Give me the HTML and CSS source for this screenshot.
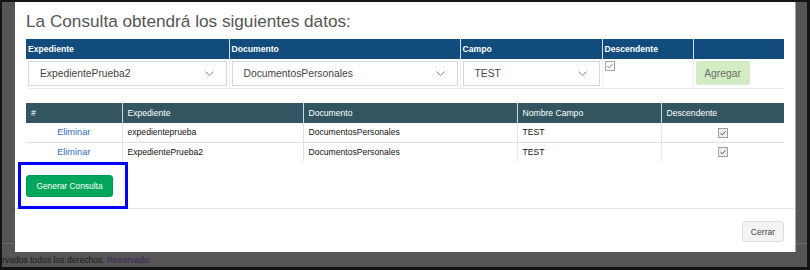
FILE: index.html
```html
<!DOCTYPE html>
<html lang="es">

<head>
    <meta charset="UTF-8">
    <meta name="viewport" content="width=device-width, initial-scale=1.0">
    <title>Consulta</title>
    <link rel="stylesheet" href="styles.css">
</head>

<body>

    <div class="screen">
        <div class="page">
            <footer class="page-footer">rvados todos los derechos. <a class="visited">Reservado</a></footer>
        </div>

        <!-- Modal de consulta -->
        <div class="modal">
            <div class="modal-body">
                <h3 class="modal-title">La Consulta obtendrá los siguientes datos:</h3>

                <table class="picker">
                    <colgroup>
                        <col style="width: 203px">
                        <col style="width: 231px">
                        <col style="width: 142px">
                        <col style="width: 91px">
                        <col style="width: 91px">
                    </colgroup>
                    <tr>
                        <th>Expediente</th>
                        <th>Documento</th>
                        <th>Campo</th>
                        <th>Descendente</th>
                        <th></th>
                    </tr>
                    <tr>
                        <td>
                            <div class="select">
                                <span>ExpedientePrueba2</span>
                                <svg viewBox="0 0 9 5"><path d="M0.5 0.5 L4.5 4.5 L8.5 0.5" fill="none" stroke="#8c8c8c" /></svg>
                            </div>
                        </td>
                        <td>
                            <div class="select">
                                <span>DocumentosPersonales</span>
                                <svg viewBox="0 0 9 5"><path d="M0.5 0.5 L4.5 4.5 L8.5 0.5" fill="none" stroke="#8c8c8c" /></svg>
                            </div>
                        </td>
                        <td>
                            <div class="select">
                                <span>TEST</span>
                                <svg viewBox="0 0 9 5"><path d="M0.5 0.5 L4.5 4.5 L8.5 0.5" fill="none" stroke="#8c8c8c" /></svg>
                            </div>
                        </td>
                        <td>
                            <svg class="check light" viewBox="0 0 10 10"><rect x="0.5" y="0.5" width="9" height="9" fill="#fafafa" stroke="#a8a8a8" /><path d="M2.3 5 L4.1 6.8 L7.6 3" fill="none" stroke="#8a8a8a" /></svg>
                        </td>
                        <td><button class="btn btn-add">Agregar</button></td>
                    </tr>
                </table>

                <table class="results">
                    <colgroup>
                        <col style="width: 96px">
                        <col style="width: 181px">
                        <col style="width: 214px">
                        <col style="width: 144px">
                        <col style="width: 123px">
                    </colgroup>
                    <tr>
                        <th>#</th>
                        <th>Expediente</th>
                        <th>Documento</th>
                        <th>Nombre Campo</th>
                        <th>Descendente</th>
                    </tr>
                    <tr>
                        <td class="center"><a class="link" href="#">Eliminar</a></td>
                        <td>expedienteprueba</td>
                        <td>DocumentosPersonales</td>
                        <td>TEST</td>
                        <td class="center">
                            <svg class="check" viewBox="0 0 10 10"><rect x="0.5" y="0.5" width="9" height="9" fill="#eeeeee" stroke="#a0a0a0" /><path d="M2.5 5.2 L4.2 6.8 L7.5 3.4" fill="none" stroke="#555" /></svg>
                        </td>
                    </tr>
                    <tr>
                        <td class="center"><a class="link" href="#">Eliminar</a></td>
                        <td>ExpedientePrueba2</td>
                        <td>DocumentosPersonales</td>
                        <td>TEST</td>
                        <td class="center">
                            <svg class="check" viewBox="0 0 10 10"><rect x="0.5" y="0.5" width="9" height="9" fill="#eeeeee" stroke="#a0a0a0" /><path d="M2.5 5.2 L4.2 6.8 L7.5 3.4" fill="none" stroke="#555" /></svg>
                        </td>
                    </tr>
                </table>

                <div class="actions">
                    <button class="btn btn-generate">Generar Consulta</button>
                </div>

                <!-- Marca azul sobre el botón -->
                <div class="highlight"></div>
            </div>

            <div class="modal-footer">
                <button class="btn btn-close">Cerrar</button>
            </div>
        </div>
    </div>

</body>

</html>
```

FILE: styles.css
```css
* {
    box-sizing: border-box;
}

body {
    margin: 0;
    font-family: "Liberation Sans", Arial, sans-serif;
}

.screen {
    position: relative;
    width: 810px;
    height: 270px;
    border-style: solid;
    border-color: #141414;
    border-width: 2px 3px 3px 2px;
    background-color: #555;
    overflow: hidden;
}

/* Page behind the overlay */
.page {
    height: 100%;
    display: flex;
    flex-direction: column;
    justify-content: flex-end;
}

.page-footer {
    height: 24px;
    padding-top: 10px;
    border-top: 1px solid #6b6b6b;
    font-size: 8.6px;
    line-height: 12px;
    color: #1c1c1c;
    white-space: nowrap;
}

.visited {
    color: #42205a;
}

/* Modal */
.modal {
    position: absolute;
    left: 13px;
    top: 0;
    width: 781px;
    background-color: #fff;
    border-right: 1px solid #a3a3a3;
}

.modal-body {
    position: relative;
    padding: 9px 11px 11px;
}

.modal-title {
    margin: 0 0 8px;
    font-size: 17.2px;
    line-height: 20px;
    font-weight: normal;
    color: #555;
}

table {
    width: 100%;
    border-collapse: collapse;
    table-layout: fixed;
}

.picker th {
    height: 20px;
    padding: 0 2px;
    background-color: #114c7d;
    color: #fff;
    font-size: 8.6px;
    font-weight: bold;
    text-align: left;
    border-left: 1px solid #d5dfea;
}

.picker td {
    padding: 2px;
    vertical-align: top;
    border-left: 1px solid #f0f0f0;
    border-bottom: 1px solid #ececec;
}

.picker th:first-child,
.picker td:first-child,
.results th:first-child,
.results td:first-child {
    border-left: none;
}

.select {
    display: flex;
    align-items: center;
    justify-content: space-between;
    height: 25px;
    padding: 0 12px 0 11px;
    border: 1px solid #d2d8df;
    font-size: 10.3px;
    color: #444;
}

.select svg {
    width: 9px;
    height: 5px;
}

.check {
    display: inline-block;
    width: 10px;
    height: 10px;
    vertical-align: middle;
}

.check.light {
    vertical-align: top;
}

.btn {
    font-family: inherit;
    border: 1px solid transparent;
    border-radius: 3px;
    padding: 0;
    cursor: pointer;
}

.btn-add {
    width: 54px;
    height: 24px;
    background-color: #d4ecc3;
    color: #6e6e6e;
    font-size: 10.3px;
}

.results {
    margin-top: 14px;
}

.results th {
    height: 20px;
    padding: 0 5px;
    background-color: #335562;
    color: #fff;
    font-size: 8.6px;
    font-weight: normal;
    text-align: left;
    border-left: 1px solid #d0d8db;
}

.results td {
    height: 19px;
    padding: 0 5px;
    font-size: 8.6px;
    color: #111;
    border-left: 1px solid #e2e2e2;
    border-bottom: 1px solid #e0e0e0;
}

.results tr:last-child td {
    border-bottom: none;
}

.results .center {
    text-align: center;
}

.link {
    color: #2f6cbf;
    font-size: 9.2px;
    text-decoration: none;
}

.actions {
    padding-top: 14px;
}

.btn-generate {
    width: 87px;
    height: 22px;
    background-color: #00a65a;
    border-color: #009551;
    color: #fff;
    font-size: 8.4px;
}

.highlight {
    position: absolute;
    left: 3px;
    top: 160px;
    width: 110px;
    height: 47px;
    border: 3px solid #0000ff;
}

.modal-footer {
    display: flex;
    justify-content: flex-end;
    padding: 12px 11px 10px;
    border-top: 1px solid #e6e6e6;
}

.btn-close {
    width: 42px;
    height: 21px;
    background-color: #f4f4f4;
    border-color: #ddd;
    color: #444;
    font-size: 8.6px;
}
```
